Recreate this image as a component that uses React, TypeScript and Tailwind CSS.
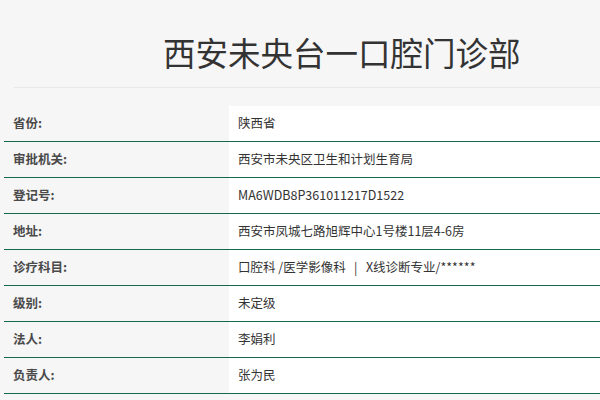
import React from 'react';

interface InfoRow {
  label: string;
  value: string;
}

const rows: InfoRow[] = [
  { label: '省份:', value: '陕西省' },
  { label: '审批机关:', value: '西安市未央区卫生和计划生育局' },
  { label: '登记号:', value: 'MA6WDB8P361011217D1522' },
  { label: '地址:', value: '西安市凤城七路旭辉中心1号楼11层4-6房' },
  { label: '诊疗科目:', value: '口腔科 /医学影像科   |   X线诊断专业/******' },
  { label: '级别:', value: '未定级' },
  { label: '法人:', value: '李娟利' },
  { label: '负责人:', value: '张为民' },
];

const App: React.FC = () => {
  return (
    <div
      className="min-h-[400px] w-full overflow-hidden bg-[#f6f6f6] text-[#333]"
      style={{ fontFamily: '"Microsoft YaHei", "Noto Sans CJK SC", "Noto Sans", sans-serif' }}
    >
      <div className="ml-[14px] h-[88px] border-b border-[#e8e8e8] pl-[149px] pt-[28px]">
        <h1 className="whitespace-nowrap text-[32.5px] font-normal leading-[48px] text-[#333]">西安未央台一口腔门诊部</h1>
      </div>

      <div className="ml-[4px] mt-[18px]">
        {rows.map(row => (
          <div key={row.label} className="flex h-[36px] border-b border-[#146a48]">
            <div className="flex w-[225px] shrink-0 items-center pl-[9px] text-[12.5px] font-bold text-[#4a4a4a]">
              {row.label}
            </div>
            <div className="flex flex-1 items-center whitespace-pre bg-white pl-[9px] text-[12.5px] text-[#333]">
              {row.value}
            </div>
          </div>
        ))}
      </div>
    </div>
  );
};

export default App;
